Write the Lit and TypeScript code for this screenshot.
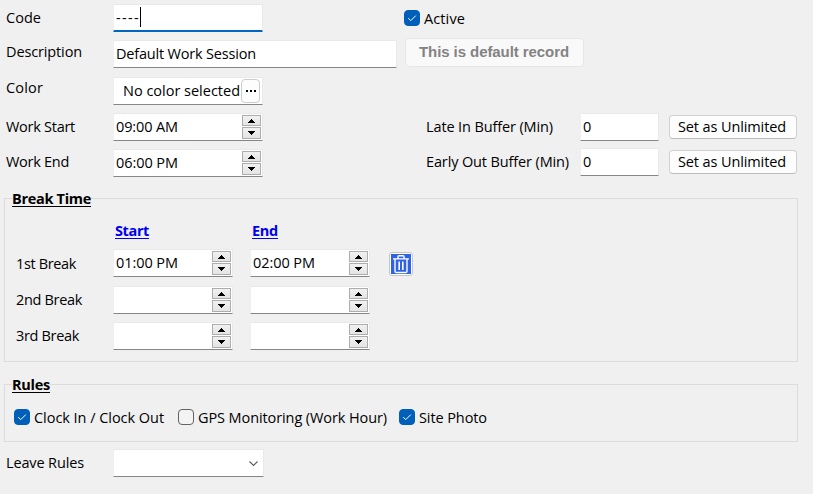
import { LitElement, html, css, svg, nothing } from "lit";
import { customElement, property } from "lit/decorators.js";
import { styleMap } from "lit/directives/style-map.js";

const FAMILY = '"Open Sans", "Noto Sans", sans-serif';
const ctx = document.createElement("canvas").getContext("2d")!;

/* Text tracked so that it fills a given advance width. */
@customElement("ui-text")
class UiText extends LitElement {
  @property() text = "";
  @property({ type: Number }) w = 0;
  @property() kind = "";
  static styles = css`
    :host { display: block; flex: none; height: 20px; }
    span { display: block; padding-top: 1px; font: 14.5px/20px "Open Sans", "Noto Sans", sans-serif; white-space: pre; font-kerning: none; }
    .bold { font-weight: 700; text-decoration: underline; text-decoration-thickness: 1px; text-underline-offset: 2px; }
    .link { color: #0000f0; }
    .arial { padding-top: 0; font: bold 15px/20px "Liberation Sans", Arial, sans-serif; color: #838383; }
  `;
  render() {
    const bold = this.kind.includes("bold");
    const arial = this.kind === "arial";
    ctx.font = arial ? 'bold 15px "Liberation Sans"' : `${bold ? "700 " : ""}14.5px ${FAMILY}`;
    const gap = (this.w - ctx.measureText(this.text).width) / this.text.length;
    return html`<span class=${this.kind} style=${styleMap({ letterSpacing: `${gap.toFixed(3)}px`, width: `${this.w}px` })}>${this.text}</span>`;
  }
}

const t = (text: string, w: number, kind = "") => html`<ui-text .text=${text} .w=${w} .kind=${kind}></ui-text>`;

@customElement("ui-check")
class UiCheck extends LitElement {
  @property({ type: Boolean }) checked = false;
  static styles = css`
    :host { display: flex; gap: 4px; align-items: flex-start; height: 20px; }
    .box { width: 16px; height: 16px; margin-top: 2px; box-sizing: border-box; border-radius: 4px; border: 1px solid #626262; background: #f3f3f3; }
    .on { background: #005fb8; border-color: #005fb8; }
    svg { display: block; }
  `;
  render() {
    return html`<div class="box ${this.checked ? "on" : ""}">
        ${this.checked
          ? html`<svg width="14" height="14" viewBox="0 0 14 14" fill="none" stroke="#fff" stroke-width="1"><path d="M3.2 7.2 L5.8 9.6 L10.8 4.6" /></svg>`
          : nothing}
      </div><slot></slot>`;
  }
}

@customElement("ui-spin")
class UiSpin extends LitElement {
  static styles = css`
    :host { display: flex; flex-direction: column; gap: 1px; width: 19px; margin-left: auto; margin-right: 1px; padding-top: 1px; }
    .b { height: 12px; box-sizing: border-box; border: 1px solid #adadad; background: linear-gradient(#f1f1f1, #e4e4e4); display: flex; align-items: center; justify-content: center; }
    .b:first-child { height: 11px; }
    svg { display: block; }
  `;
  render() {
    return html`
      <div class="b"><svg width="7" height="4" viewBox="0 0 7 4" shape-rendering="crispEdges"><path d="M3 0h1v1h1v1h1v1h1v1H0V3h1V2h1V1h1z" /></svg></div>
      <div class="b"><svg width="7" height="4" viewBox="0 0 7 4" shape-rendering="crispEdges"><path d="M0 0h7v1H6v1H5v1H4v1H3V3H2V2H1V1H0z" /></svg></div>`;
  }
}

const chevron = svg`<path d="M1.5 1.5 L5.5 5.5 L9.5 1.5" fill="none" stroke="#5a5a5a" stroke-width="1.1" />`;

@customElement("app-root")
class AppRoot extends LitElement {
  static styles = css`
    :host { display: block; width: 813px; height: 494px; background: #f0f0f0; overflow: hidden; color: #000; }
    * { box-sizing: border-box; }
    .row { display: flex; align-items: flex-start; padding-left: 6px; }
    .lab { width: 107px; flex: none; }
    .field { display: flex; align-items: flex-start; flex: none; height: 28px; background: #fff; border: 1px solid #e9e9e9; border-left-color: #efefef; border-bottom-color: #868686; padding-left: 2px; border-radius: 1px; }
    .w150 { width: 150px; } .w284 { width: 284px; } .w120 { width: 120px; } .w79 { width: 79px; }
    .focus { border-bottom: 2px solid #0067c0; }
    .caret { width: 1px; height: 20px; margin: 2px 0 0 0; background: #000; }
    .p2 { padding-top: 2px; }
    .r1 { padding-top: 4px; height: 36px; } .r1 .lab { padding-top: 3px; }
    .r1 ui-check { margin: 4px 0 0 141px; }
    .r2 { padding-top: 4px; height: 37px; } .r2 .lab { padding-top: 1px; }
    .badge { width: 179px; height: 29px; margin: -2px 0 0 8px; padding: 3px 0 0 13px; background: #f9f9f9; border: 1px solid #e7e7e7; border-radius: 4px; }
    .r3 { padding-top: 4px; height: 40px; } .r3 .lab { padding-top: 0; }
    .color { padding-left: 9px; }
    .dots { width: 19px; height: 24px; margin: 1px 0 0 1px; border: 1px solid #cdcdcd; border-radius: 4px; background: #fdfdfd; display: flex; gap: 2px; align-items: center; justify-content: center; }
    .dots i { width: 2px; height: 2px; background: #000; }
    .r4 { height: 36px; } .r4 .lab, .r4 .lab2 { padding-top: 3px; }
    .r5 { height: 49px; } .r5 .lab, .r5 .lab2 { padding-top: 2px; }
    .lab2 { width: 154px; margin-left: 163px; flex: none; }
    .btn { width: 128px; height: 24px; margin: 2px 0 0 10px; padding: 1px 0 0 8px; background: #fdfdfd; border: 1px solid #d0d0d0; border-bottom-color: #bcbcbc; border-radius: 4px; flex: none; }
    .up { margin-top: -1px; }
    .btn ui-text { margin-top: -1px; }
    .btn.up { margin-top: 1px; }
    .group { width: 794px; margin-left: 4px; border: 1px solid #dcdcdc; }
    .breaks { height: 164px; }
    .legend { background: #f0f0f0; width: max-content; height: 20px; margin: -11px 0 0 7px; }
    .heads { display: flex; padding: 12px 0 0 110px; gap: 103px; height: 41px; }
    .brk { display: flex; align-items: flex-start; padding-left: 11px; height: 36px; }
    .brk.first { height: 37px; }
    .brk .lab { width: 97px; padding-top: 4px; }
    .brk.later .lab { padding-top: 3px; }
    .brk .field + .field { margin-left: 17px; }
    .trash { width: 24px; height: 24px; margin: 3px 0 0 19px; border: 1px solid #c6c6c6; border-radius: 3px; background: #fdfdfd; padding: 1px; }
    .trash svg { display: block; }
    .rules { height: 58px; margin-top: 22px; }
    .checks { display: flex; padding: 13px 0 0 9px; }
    .c2 { margin-left: 14px; } .c3 { margin-left: 12px; }
    .leave { padding-top: 7px; } .leave .lab { padding-top: 3px; }
    .combo { width: 151px; }
    .combo svg { margin: 10px 4px 0 auto; }
  `;

  private time(value: string, cls: string) {
    return html`<div class="field ${cls}"><div class="p2">${value ? t(value, 62) : nothing}</div><ui-spin></ui-spin></div>`;
  }

  render() {
    return html`
      <div class="row r1">
        <div class="lab">${t("Code", 35)}</div>
        <div class="field w150 focus"><div class="p2">${t("----", 24)}</div><div class="caret"></div></div>
        <ui-check checked>${t("Active", 41)}</ui-check>
      </div>
      <div class="row r2">
        <div class="lab">${t("Description", 76)}</div>
        <div class="field w284"><div class="p2">${t("Default Work Session", 140)}</div></div>
        <div class="badge">${t("This is default record", 150, "arial")}</div>
      </div>
      <div class="row r3">
        <div class="lab">${t("Color", 37)}</div>
        <div class="field w150 color"><div class="p2">${t("No color selected", 117)}</div><div class="dots"><i></i><i></i><i></i></div></div>
      </div>
      <div class="row r4">
        <div class="lab">${t("Work Start", 69)}</div>
        ${this.time("09:00 AM", "w150")}
        <div class="lab2">${t("Late In Buffer (Min)", 127)}</div>
        <div class="field w79"><div class="p2">${t("0", 8)}</div></div>
        <div class="btn">${t("Set as Unlimited", 108)}</div>
      </div>
      <div class="row r5">
        <div class="lab">${t("Work End", 63)}</div>
        ${this.time("06:00 PM", "w150")}
        <div class="lab2">${t("Early Out Buffer (Min)", 143)}</div>
        <div class="field w79 up"><div class="p2">${t("0", 8)}</div></div>
        <div class="btn up">${t("Set as Unlimited", 108)}</div>
      </div>
      <div class="group breaks">
        <div class="legend">${t("Break Time", 79, "bold")}</div>
        <div class="heads">${t("Start", 34, "bold link")}${t("End", 26, "bold link")}</div>
        ${["1st", "2nd", "3rd"].map((n, i) => html`
          <div class="brk ${i ? "later" : "first"}">
            <div class="lab">${t(`${n} Break`, [60, 66, 63][i])}</div>
            ${this.time(i ? "" : "01:00 PM", "w120")}
            ${this.time(i ? "" : "02:00 PM", "w120")}
            ${i ? nothing : html`<div class="trash">
              <svg width="20" height="20" viewBox="0 0 20 20">
                <rect width="20" height="20" fill="#2f62e4" />
                <g fill="none" stroke="#fff" stroke-width="1.4">
                  <path d="M2 4.9H18M7 4.6V2.5Q7 1.7 7.8 1.7H12.2Q13 1.7 13 2.5V4.6M4 5V17.2Q4 18.5 5.3 18.5H14.7Q16 18.5 16 17.2V5" />
                  <path d="M8.2 7.5V16M11.8 7.5V16" stroke-width="1.6" />
                </g>
              </svg></div>`}
          </div>`)}
      </div>
      <div class="group rules">
        <div class="legend">${t("Rules", 38, "bold")}</div>
        <div class="checks">
          <ui-check checked>${t("Clock In / Clock Out", 130)}</ui-check>
          <ui-check class="c2">${t("GPS Monitoring (Work Hour)", 189)}</ui-check>
          <ui-check class="c3" checked>${t("Site Photo", 68)}</ui-check>
        </div>
      </div>
      <div class="row leave">
        <div class="lab">${t("Leave Rules", 78)}</div>
        <div class="field combo"><svg width="11" height="8">${chevron}</svg></div>
      </div>`;
  }
}
